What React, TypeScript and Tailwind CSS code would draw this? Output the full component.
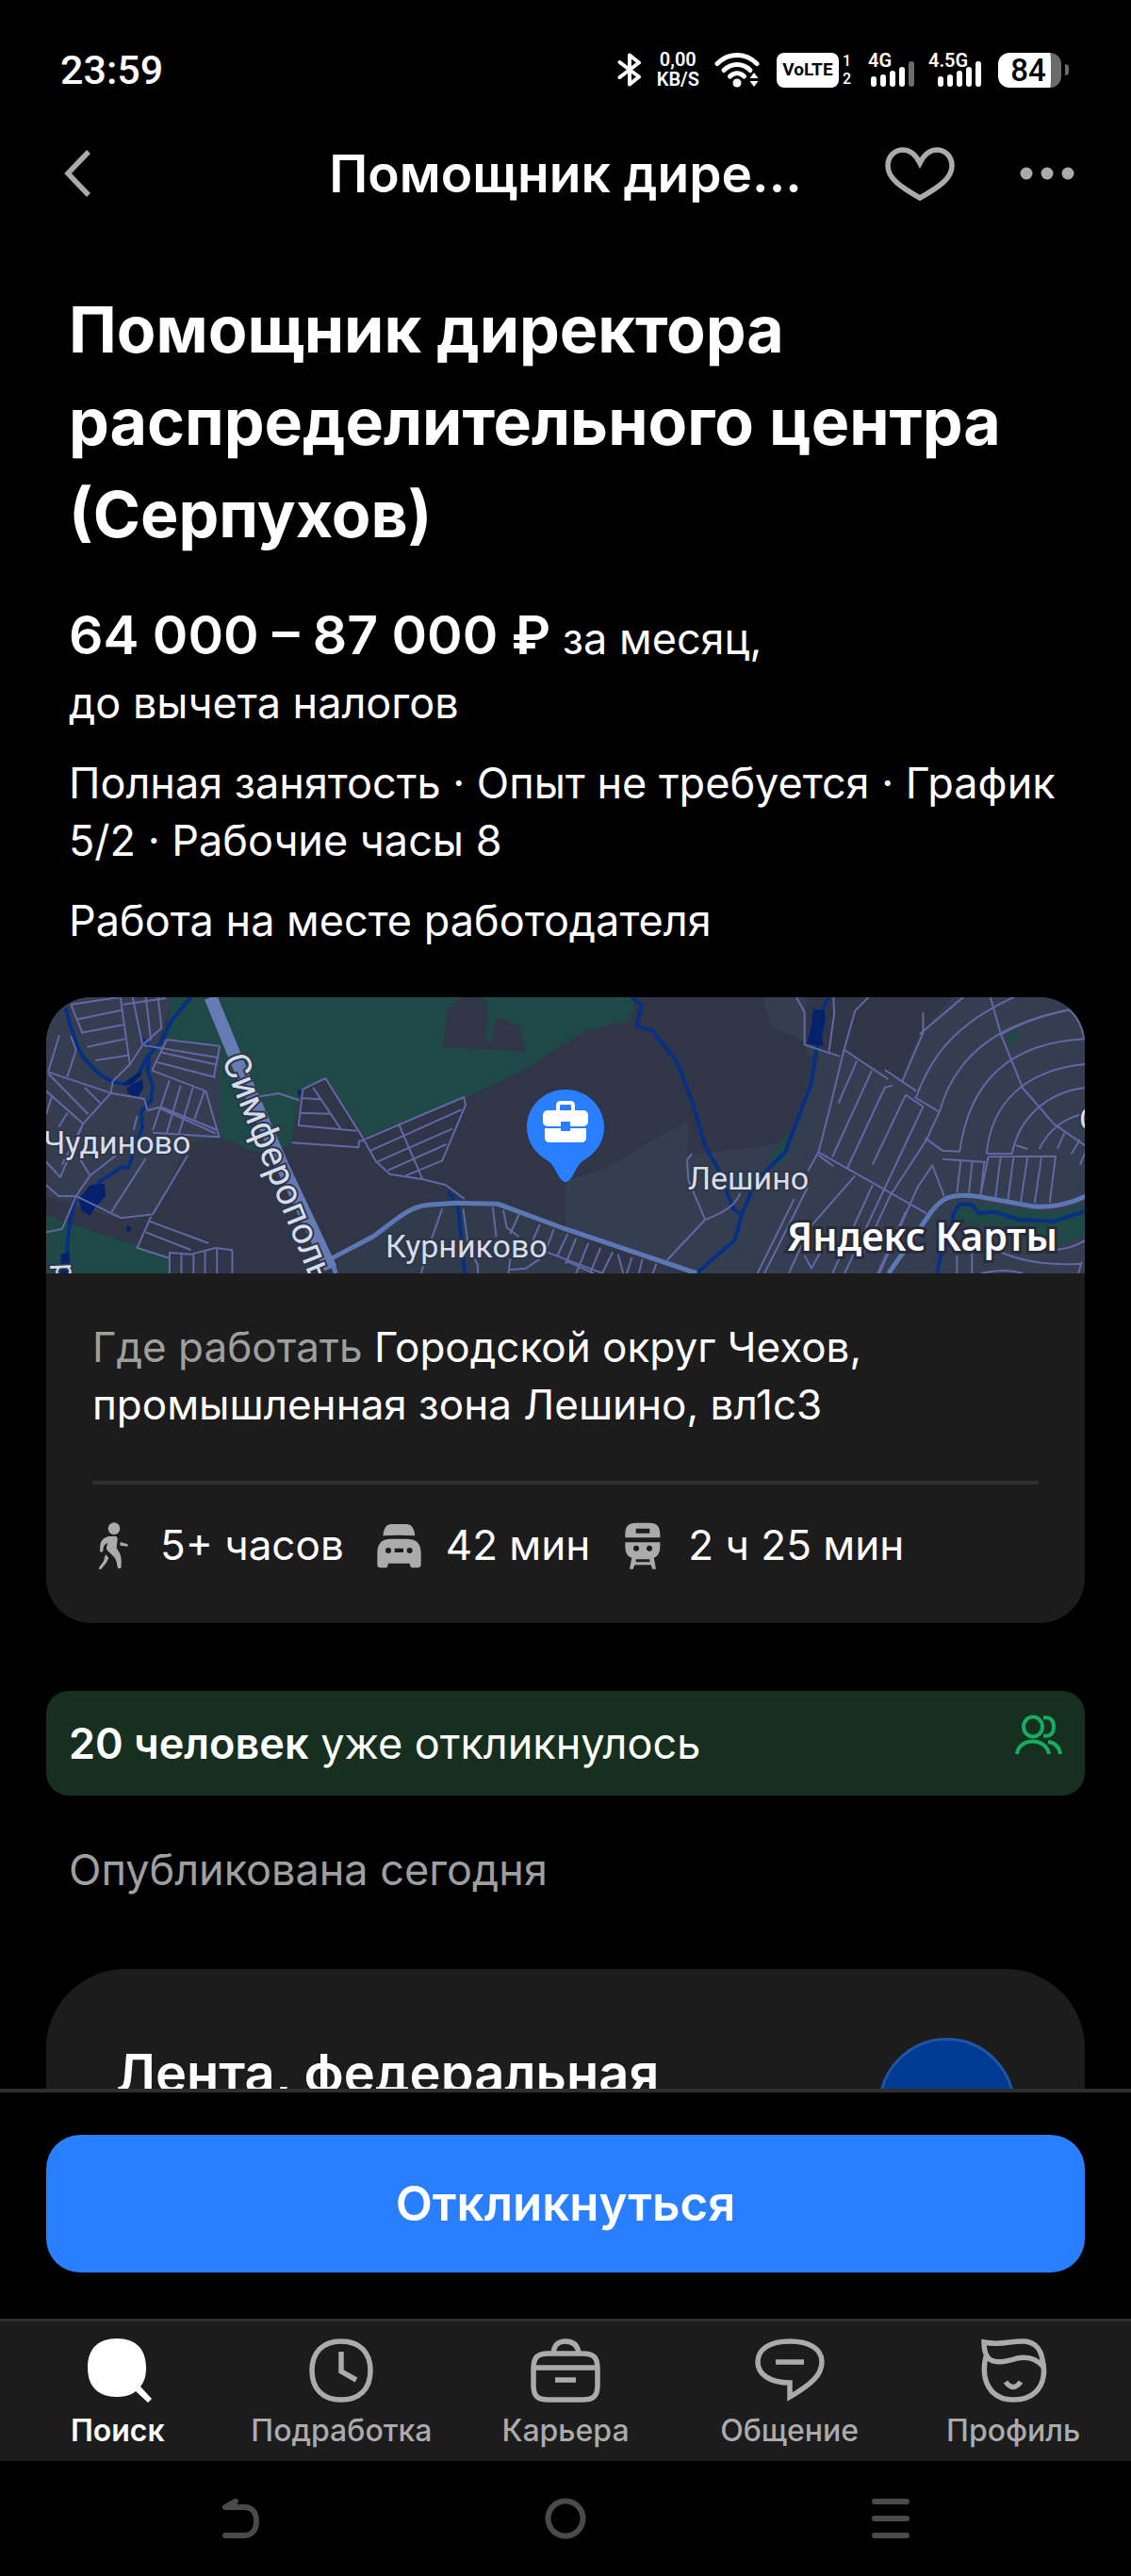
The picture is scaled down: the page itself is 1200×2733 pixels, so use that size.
import React, { useState } from 'react';

interface IconProps {
  className?: string;
}

function BluetoothIcon() {
  return (
    <svg viewBox="0 0 26 36" className="h-9 w-[26px]" fill="none" stroke="currentColor" strokeWidth="4" strokeLinejoin="round" strokeLinecap="round">
      <path d="M2.500 10 L23 25.500 L13 33.500 V2.500 L23 10.500 L2.500 26" />
    </svg>
  );
}

function WifiIcon() {
  return (
    <svg viewBox="0 0 48 38" className="h-[38px] w-12" fill="none" stroke="currentColor" strokeWidth="5" strokeLinecap="round">
      <path d="M3 12.500 C15 0.500 33 0.500 45 12.500" />
      <path d="M10 19.500 C18 11.500 30 11.500 38 19.500" />
      <path d="M16.500 26 C21 21.500 27 21.500 31.500 26" />
      <circle cx="24" cy="33" r="4.500" fill="currentColor" stroke="none" />
      <path d="M42 22 L46.500 28 H37.500Z M42 37 L37.500 31 H46.500Z" fill="currentColor" stroke="none" />
    </svg>
  );
}

function SignalIcon({ label, bars }: { label: string; bars: number }) {
  const tops = [26, 24, 20, 16, 10];
  return (
    <svg viewBox="0 0 56 38" className="h-[38px] w-14 overflow-visible" role="img" aria-label={label}>
      <text x="0" y="16" fontSize="20" fontWeight="600" fill="currentColor" className="font-['Roboto',sans-serif]">
        {label}
      </text>
      {tops.map((top, i) => (
        <rect key={top} x={(bars === 5 ? 10 : 3) + i * 10} y={top} width="6" height={37 - top} rx="3" fill={i < bars ? '#fff' : '#6b6b6b'} />
      ))}
    </svg>
  );
}

function StatusBar() {
  return (
    <div className="flex h-[148px] shrink-0 items-center justify-between pr-[66px] pl-16 font-['Roboto',sans-serif] font-medium">
      <span className="text-[43px] leading-none">23:59</span>
      <div className="flex items-center">
        <BluetoothIcon />
        <div className="ml-4 text-center text-[20px] leading-[21px] font-semibold">
          <div>0,00</div>
          <div>KB/S</div>
        </div>
        <div className="ml-4">
          <WifiIcon />
        </div>
        <span className="ml-[18px] flex h-[37px] w-[66px] items-center justify-center rounded-lg bg-white text-[19px] font-bold text-black">
          VoLTE
        </span>
        <div className="ml-1 text-base leading-[19px]">
          <div>1</div>
          <div>2</div>
        </div>
        <div className="ml-[18px] flex gap-2">
          <SignalIcon label="4G" bars={4} />
          <SignalIcon label="4.5G" bars={5} />
        </div>
        <div className="ml-[18px] flex items-center gap-1">
          <span className="flex h-[37px] w-[67px] items-center justify-center rounded-xl border-r-[11px] border-[#6b6b6b] bg-white pl-2 text-[33px] leading-none text-black">
            84
          </span>
          <span className="h-3 w-1 rounded-r bg-[#6b6b6b]" />
        </div>
      </div>
    </div>
  );
}

function Header() {
  const [liked, setLiked] = useState(false);
  return (
    <header className="flex h-[72px] shrink-0 items-center justify-between pr-[60px] pl-[66px]">
      <button type="button" aria-label="Назад" className="flex w-[206px] text-[#ababab]">
        <svg viewBox="0 0 32 52" className="h-[52px] w-8" fill="none" stroke="currentColor" strokeWidth="5.500">
          <path d="M28 3 L6 26 L28 49" />
        </svg>
      </button>
      <div className="flex-1 truncate text-center text-[55px] leading-[72px] font-semibold">Помощник дире...</div>
      <div className="flex w-[212px] items-center justify-end gap-[68px] text-[#ababab]">
        <button type="button" aria-label="В избранное" aria-pressed={liked} onClick={() => setLiked(!liked)}>
          <svg viewBox="0 0 76 58" className="h-[58px] w-[76px]" fill={liked ? 'currentColor' : 'none'} stroke="currentColor" strokeWidth="5.500">
            <path d="M38 18 C33 8 27 4 20 4 C11 4 4 11 4 21 C4 34 17 43 38 55 C59 43 72 34 72 21 C72 11 65 4 56 4 C49 4 43 8 38 18Z" />
          </svg>
        </button>
        <button type="button" aria-label="Ещё">
          <svg viewBox="0 0 58 14" className="h-3.5 w-[58px]" fill="currentColor">
            <circle cx="7" cy="7" r="6.500" />
            <circle cx="29" cy="7" r="6.500" />
            <circle cx="51" cy="7" r="6.500" />
          </svg>
        </button>
      </div>
    </header>
  );
}

// Two adjoining tiles share one stretched grid, so strokes must not scale.
function RoadMap() {
  return (
    <svg viewBox="0 0 1102 293" preserveAspectRatio="xMidYMid slice" className="block w-full" role="img" aria-label="Карта">
      <rect width="1102" height="293" fill="#303647" />
      <g transform="translate(-9 -19) scale(0.37 0.3333)" fill="none" strokeLinejoin="round" className="[&_path]:[vector-effect:non-scaling-stroke]">
        <g>
          <path fill="#1f4947" d="M385 57 H1700 V130 L1568 165 L1400 285 L1230 375 L940 500 L825 315 L755 350 L725 530 L620 550 L520 500 L430 520 L525 210 L370 190Z" />
          <path fill="#1f4947" d="M24 750 L130 790 L290 850 L380 890 V936 H24Z M80 90 L130 190 L210 320 L150 270 L100 190Z" />
          <path fill="#303647" d="M1160 215 L1175 100 L1210 57 H1275 L1290 90 L1285 200 L1300 200 L1315 120 L1380 145 L1400 230Z" />
          <path fill="#343e50" d="M24 57 H385 L350 190 L525 210 L520 500 L430 520 L340 740 L220 760 L24 690Z" />
          <path fill="#303b4b" d="M860 890 L1080 720 L1320 715 L1568 820 V936 H850Z" />
        </g>
        <g stroke="#053084" strokeWidth="4">
          <path d="M80 90 C100 180 120 240 140 260 C180 310 200 325 250 335 C300 320 290 280 320 240 L350 205 L385 130 L440 57" />
          <path d="M297 185 L320 215 L350 215 M320 240 L315 290 L330 340 L325 385 L297 420 L300 470 L260 600 L240 598 L170 650 M110 690 C90 760 85 820 82 930 M1175 675 L1205 720 L1225 936" />
        </g>
        <path fill="#05216e" d="M255 345 L300 318 L303 345 L285 380 L258 362Z M150 655 L192 650 L195 690 L165 725 L150 752 L125 735 L118 700Z M240 335 L290 295 L300 300 L270 335Z M66 875 L90 868 L96 936 H66Z M745 350 L762 358 L748 375Z M255 785 h12 v18 h-12Z" />
        <g stroke="#6367a5" strokeWidth="2">
          <path d="M95 80 L235 57 M110 128 L240 98 M125 170 L245 145 M142 215 L250 190 M165 258 L258 242 M95 80 L128 170 M237 57 L265 275 M245 80 L368 60 M272 57 L300 205 M310 57 L325 195 M345 57 L355 155 L300 210 L265 270 L215 325 L210 362 L130 460" />
          <path d="M305 210 L520 250 M370 192 L522 212 M350 232 L515 272 M335 262 L510 312 M328 290 L480 355 M370 192 L328 290 M522 212 L505 312" />
          <path d="M378 322 L330 480 M410 338 L370 490 M445 345 L405 492 M478 355 L450 445 M482 355 L520 502 L330 488 M350 405 L515 480 M315 418 L345 408 L510 490" />
          <path d="M62 178 L30 295 L210 362 L305 380 L315 418 M95 180 L110 225 L85 310 M30 300 L145 430 M24 355 L130 460 L65 630 L24 580 M135 345 L180 395 M40 375 L24 430 M85 425 L60 470 M130 460 L70 590" />
          <path d="M24 655 L60 690 L110 690 L240 760 L330 748 L430 560 M110 690 L150 625 L225 560 M120 570 L150 625 M212 740 L310 570 M110 690 L70 795 L24 805 M325 755 L285 855 L380 888 M320 770 L490 840 M310 805 L440 862 M378 936 V870 L440 875 L510 855 L558 862 V936 M412 870 V936 M447 874 V936 M480 865 V936 M514 855 V936 M275 480 L285 435" />
          <path d="M625 375 L690 363 L750 385 M760 350 L825 315 L930 500 L970 580 L1010 620 L1105 637 L1170 655 L1225 700 M760 350 L748 465 L915 482 M790 345 L870 478 M755 378 L815 382 M752 425 L840 428 M728 520 L920 535 L922 515 L940 512" />
          <path d="M940 508 L1222 375 L1227 400 L1160 577 L1055 625 M955 545 L1215 415 M975 580 L1190 475 M1005 608 L1172 525 M1037 465 L1103 635" />
          <path d="M1160 730 L1130 825 M1220 730 L1235 850 L1262 910 V936 M1305 725 L1315 820 M1335 735 L1345 790 L1380 820 M1380 748 L1355 810 M1440 780 L1412 850 M1480 795 L1455 870 M1520 810 L1490 880 M1100 936 L1108 900 M1350 936 L1355 890 M1350 925 L1400 920 L1440 890 M1440 860 L1620 936" />
        </g>
        <g transform="translate(1514 0)">
          <path fill="#1f4947" d="M0 57 H65 V140 L0 190Z M90 57 H190 L200 110 L170 75 L90 75Z" />
          <path fill="#343e50" d="M565 57 H690 V240 L730 240 L640 520 L350 560 L350 450 L100 610 L0 640 V790 L370 936 H1490 V57 H870 L800 220 L780 250 L690 200 L590 150Z" />
          <path fill="#303647" d="M870 57 H1110 L1010 180 L960 325 L800 230Z" />
          <path fill="#1f4947" d="M1120 720 L1180 715 L1400 745 L1490 715 V815 L1410 850 L1340 800 L1200 780 L1110 780Z M590 560 L640 480 L630 580 L590 600Z M1262 168 L1290 162 L1300 190 L1275 212Z" />
          <g stroke="#053084" strokeWidth="4">
            <path d="M190 57 L218 85 L203 148 L250 165 L320 265 L360 380 L400 530 L440 610 L480 730 L505 748" />
            <path d="M755 57 L735 100 L720 210 L705 330 L630 550 L565 620 L530 680 L505 750 L485 830 L375 936" />
            <path d="M1065 936 L1075 880 L1110 810 V750 L1130 715 L1165 718 L1185 745 L1230 740 L1300 765 L1400 770 L1490 738" />
          </g>
          <path fill="#05216e" d="M710 95 L742 98 L745 130 L735 180 L738 212 L692 205 L705 145Z" />
          <g stroke="#6367a5" strokeWidth="2">
            <path d="M662 57 L685 105 V208 L785 245 M768 57 L770 110 L755 230 M868 57 L830 100 L798 225 L790 260 L760 400 L725 550 L695 610 M800 225 L925 318 M915 288 L1005 355 M1000 375 L1072 422 M835 260 L782 395 M878 290 L765 565" />
            <path d="M937 338 L915 345 L808 600 M1025 105 V170 L965 325 M1140 57 L1015 175 M1285 57 C1120 140 1050 240 1005 375 M975 368 L1025 405 L800 936 M975 368 L880 590 M1072 422 L1035 510 L930 690 L850 880 M1030 505 L1080 545 L1130 548" />
            <path d="M1218 57 L1248 175 L1310 345 L1400 460 L1490 530 M1490 190 C1300 200 1160 300 1130 548 M1445 97 C1250 140 1120 230 1072 422 M1445 97 C1470 125 1480 150 1487 190 M1490 270 C1310 290 1220 400 1207 555 M1207 555 H1280 C1300 440 1380 360 1490 345 M1358 540 C1390 470 1440 440 1480 430 M1410 538 L1430 490 M1450 555 L1475 510 M1475 590 L1490 550 M1290 528 L1325 540" />
            <path d="M1248 175 C1330 125 1390 110 1445 97 M725 550 L1035 745 M725 560 L768 595 M1080 572 L1205 582 M1212 565 L1405 563 L1388 710 M1212 565 L1190 685 M1133 577 L1122 680 M1166 580 L1156 680 M1200 582 L1190 690 M1247 568 L1232 700 M1284 568 L1268 705 M1324 568 L1305 710 M1364 568 L1345 712" />
            <path d="M1085 690 L1052 592 L1010 660 L900 936 M830 625 L700 790 L640 936 M880 655 L765 936 M975 740 L895 936 M695 660 L570 936 M655 700 L550 936 M685 880 L705 920 L740 850" />
            <path d="M362 555 L348 575 L352 640 L400 765 L290 895 M400 765 C450 745 490 720 500 680" />
            <path d="M30 825 L0 905 M65 840 L30 936 M100 855 L70 936 M135 868 L105 936 M150 875 L165 936 M190 885 L175 936 M220 890 L210 936 M260 905 L250 936 M0 895 L80 936 M1122 880 V936 M1165 870 V936 M1250 870 C1330 905 1400 910 1480 905 M1190 936 C1260 920 1290 930 1310 936 M1480 900 L1470 936 M1320 850 C1400 870 1450 860 1490 830" />
          </g>
        </g>
        <g stroke="#5b78b5">
          <path strokeWidth="5" d="M855 936 L840 890 L960 820 C1030 765 1060 725 1120 718 L1200 712 L1320 715 L1514 795 L1890 936" />
          <path strokeWidth="5" d="M2440 936 L2550 760 C2590 690 2620 680 2700 692 L2850 722 C2920 730 2970 710 3010 688" />
        </g>
        <path stroke="#667bb4" strokeWidth="14" d="M496 57 L575 270 L700 590 L840 920" />
      </g>
      <g fill="#d5deed" className="font-['Roboto',sans-serif]" fontSize="34" stroke="#303647" strokeWidth="4" paintOrder="stroke">
        <text x="-3" y="166">Чудиново</text>
        <text x="360" y="276">Курниково</text>
        <text x="681" y="204">Лешино</text>
        <text x="1096" y="141">С</text>
        <text transform="translate(186 66) rotate(68)" fontSize="39">Симферополь</text>
        <text transform="translate(10 283) rotate(87)" fontSize="30">р</text>
      </g>
      <text x="1073" y="269" textAnchor="end" fontSize="41" fontWeight="600" fill="#fff" stroke="#272c38" strokeWidth="6" paintOrder="stroke" className="font-['Noto_Sans',sans-serif]">
        Яндекс Карты
      </text>
      <g>
        <path fill="#297fff" d="M551 98 C574 98 592 116 592 138 C592 154 583 166 569 174 C563 178 561 187 556 193 C553 197 549 197 546 193 C541 187 539 178 533 174 C519 166 510 154 510 138 C510 116 528 98 551 98Z" />
        <path fill="none" stroke="#fff" strokeWidth="4" d="M543 121 V115 Q543 112 546 112 H556 Q559 112 559 115 V121" />
        <rect x="527" y="120" width="48" height="17" rx="5" fill="#fff" />
        <path fill="#fff" d="M529 139 H573 V149 Q573 154 568 154 H534 Q529 154 529 149Z" />
        <rect x="546" y="132" width="10" height="10" fill="#297fff" />
      </g>
    </svg>
  );
}

function WalkIcon() {
  return (
    <svg viewBox="0 0 144 150" className="h-[50px] w-12" fill="currentColor">
      <circle cx="69" cy="20" r="19" />
      <path d="M24 93 L25 72 C27 58 38 48 52 45 L72 44 Q80 45 80 54 L77 82 C88 98 92 108 92 120 V144 Q86 151 80 144 C79 132 76 120 70 112 L48 90 Q43 84 46 76 L49 65 C40 70 36 74 35 82 L34 92 Q28 98 24 93Z" />
      <path d="M43 103 L52 114 L44 130 L28 149 H20 L22 143 L36 124 L40 108Z" />
      <path d="M89 63 L112 70 Q115 73 112 77 L88 74Z" />
    </svg>
  );
}

function CarIcon() {
  return (
    <svg viewBox="0 0 156 150" className="h-[50px] w-[52px]" fill="currentColor">
      <path d="M28 43 C31 15 40 7 55 6 H102 C118 7 126 15 130 43 Q79 39 28 43Z" />
      <path
        fillRule="evenodd"
        d="M10 95 C12 65 25 53 55 53 H103 C133 53 147 65 149 95 V135 Q148 145 138 145 H124 Q115 145 113 131 H45 Q43 145 35 145 H20 Q10 145 10 135Z M36 90 a9 9 0 1 0 18 0 a9 9 0 1 0 -18 0Z M104 90 a9 9 0 1 0 18 0 a9 9 0 1 0 -18 0Z M65 83 V96 H93 V83Z"
      />
    </svg>
  );
}

function TrainIcon() {
  return (
    <svg viewBox="0 0 144 150" className="h-[50px] w-12" fill="currentColor" fillRule="evenodd">
      <path d="M16 49 V40 C16 14 25 2 50 2 H93 C118 2 127 14 127 40 V49Z M50 20 V35 H94 V20Z" />
      <path d="M16 64 H127 V75 C127 100 118 113 100 114 H43 C25 113 16 100 16 75Z M42 83 a9 9 0 1 0 18 0 a9 9 0 1 0 -18 0Z M84 83 a9 9 0 1 0 18 0 a9 9 0 1 0 -18 0Z" />
      <path d="M37 112 L30 149 H41 L46 136 H98 L103 149 H114 L107 112Z M50 118 V127 H94 V118Z" />
    </svg>
  );
}

function PeopleIcon() {
  return (
    <svg viewBox="0 0 50 44" className="h-11 w-[50px] text-[#16ad60]" fill="none" stroke="currentColor" strokeWidth="4">
      <ellipse cx="19" cy="13" rx="10" ry="10.500" />
      <path d="M30 3.500 C37 2 41 6 41 13 C41 20 37 24 30 22.500" />
      <path d="M2 42 C4 24 33 24 36 42" />
      <path d="M35 29 C43 30 47 35 48 42" />
    </svg>
  );
}

function SearchTabIcon({ className }: IconProps) {
  return (
    <svg viewBox="0 0 76 72" className={className}>
      <path fill="currentColor" d="M37 1 C57 1 68 12 68 32 C68 41 66 47 62 52 L74 65 L70 69 L57 57 C52 61 46 63 37 63 C17 63 6 52 6 32 C6 12 17 1 37 1Z" />
    </svg>
  );
}

function ClockTabIcon({ className }: IconProps) {
  return (
    <svg viewBox="0 0 76 72" className={className} fill="none" stroke="currentColor" strokeWidth="5.500">
      <path d="M38 4 C58 4 69 16 69 35 C69 54 58 66 38 66 C18 66 7 54 7 35 C7 16 18 4 38 4Z" />
      <path d="M38 15 V36 L54 45" />
    </svg>
  );
}

function CareerTabIcon({ className }: IconProps) {
  return (
    <svg viewBox="0 0 76 72" className={className} fill="none" stroke="currentColor" strokeWidth="5.500">
      <path d="M38 17 H56 C68 17 72 21 72 33 V50 C72 62 68 66 56 66 H20 C8 66 4 62 4 50 V33 C4 21 8 17 20 17Z" />
      <path d="M25 17 C26 7 31 4 38 4 C45 4 51 7 52 17 M4 32 H72 M27 45 H49" />
    </svg>
  );
}

function ChatTabIcon({ className }: IconProps) {
  return (
    <svg viewBox="0 0 76 72" className={className} fill="none" stroke="currentColor" strokeWidth="5.500">
      <path d="M38 48 C17 48 4 39 4 26 C4 12 17 4 38 4 C59 4 72 12 72 26 C72 40 60 50 38 63Z" />
      <path d="M23 26 H53" />
    </svg>
  );
}

function ProfileTabIcon({ className }: IconProps) {
  return (
    <svg viewBox="0 0 76 72" className={className} fill="none" stroke="currentColor" strokeWidth="5.500">
      <path d="M7 5 C26 9 36 3 50 4 C63 5 69 14 70 31 C62 21 52 20 42 22 C30 26 16 28 11 21 C8 17 7 12 7 5Z" />
      <path d="M9 20 C3 46 14 66 38 66 C62 66 73 50 70 28" />
      <path d="M30 47 Q38 58 46 47" />
    </svg>
  );
}

const commute = [
  { icon: WalkIcon, time: '5+ часов' },
  { icon: CarIcon, time: '42 мин' },
  { icon: TrainIcon, time: '2 ч 25 мин' }
];

const tabs = [
  { icon: SearchTabIcon, label: 'Поиск' },
  { icon: ClockTabIcon, label: 'Подработка' },
  { icon: CareerTabIcon, label: 'Карьера' },
  { icon: ChatTabIcon, label: 'Общение' },
  { icon: ProfileTabIcon, label: 'Профиль' }
];

function TabBar() {
  const [active, setActive] = useState('Поиск');
  return (
    <nav className="flex border-t-[3px] border-[#303030] bg-[#1c1c1c] pt-[17px] pr-1.5 pl-1.5 pb-3">
      {tabs.map(({ icon: Icon, label }) => (
        <button
          key={label}
          type="button"
          onClick={() => setActive(label)}
          className={`flex flex-1 flex-col items-center gap-[7px] ${active === label ? 'font-semibold text-white' : 'font-medium text-[#ababab]'}`}
        >
          <Icon className="h-[72px] w-[76px]" />
          <span className="text-[32px] leading-10">{label}</span>
        </button>
      ))}
    </nav>
  );
}

function SystemNav() {
  return (
    <div className="flex h-[122px] items-center px-[82px] text-[#4a4a4a]">
      <button type="button" aria-label="Назад" className="flex flex-1 justify-center">
        <svg viewBox="0 0 44 44" className="size-11" fill="none" stroke="currentColor" strokeWidth="6" strokeLinecap="round" strokeLinejoin="round">
          <path d="M17 4 L6 10 H26 C36 10 39 17 39 25 C39 33 35 40 26 40 H6" />
        </svg>
      </button>
      <button type="button" aria-label="Домой" className="flex flex-1 justify-center">
        <svg viewBox="0 0 44 44" className="size-11" fill="none" stroke="currentColor" strokeWidth="6">
          <circle cx="22" cy="22" r="18.500" />
        </svg>
      </button>
      <button type="button" aria-label="Недавние" className="flex flex-1 justify-center">
        <svg viewBox="0 0 44 44" className="size-11" stroke="currentColor" strokeWidth="6" strokeLinecap="round">
          <path d="M5 4 H39 M5 22 H39 M5 40 H39" />
        </svg>
      </button>
    </div>
  );
}

export default function App() {
  return (
    <div className="flex h-screen flex-col overflow-hidden bg-black font-['Inter',sans-serif] text-white">
      <StatusBar />
      <Header />

      <main className="min-h-0 flex-1 overflow-y-auto px-[49px] pt-20 text-[45px] leading-[61px] [scrollbar-width:none]">
        <div className="px-6">
          <h1 className="text-[68px] leading-[98px] font-bold">Помощник директора распределительного центра (Серпухов)</h1>
          <p className="mt-[46px] leading-[68px]">
            <span className="text-[57px] font-semibold">64 000 – 87 000 ₽</span> за месяц,
            <br />
            до вычета налогов
          </p>
          <p className="mt-5">Полная занятость · Опыт не требуется · График 5/2 · Рабочие часы 8</p>
          <p className="mt-6">Работа на месте работодателя</p>
        </div>

        <section className="mt-[51px] overflow-hidden rounded-[48px] bg-[#1c1c1c]">
          <RoadMap />
          <div className="px-[49px] pt-12 pb-[52px] text-[44px]">
            <p>
              <span className="text-[#9f9f9f]">Где работать</span> Городской округ Чехов, промышленная зона Лешино, вл1с3
            </p>
            <ul className="mt-[50px] flex gap-8 border-t-4 border-[#303030] pt-[34px]">
              {commute.map(({ icon: Icon, time }) => (
                <li key={time} className="flex items-center gap-6">
                  <span className="text-[#ababab]">
                    <Icon />
                  </span>
                  {time}
                </li>
              ))}
            </ul>
          </div>
        </section>

        <div className="mt-[72px] flex items-start justify-between rounded-3xl bg-[#172f1e] px-6 py-[25px]">
          <p>
            <span className="font-semibold">20 человек</span> уже откликнулось
          </p>
          <PeopleIcon />
        </div>

        <p className="mt-12 px-6 text-[#9f9f9f]">Опубликована сегодня</p>

        <section className="mt-[75px] flex items-start justify-between rounded-[84px] bg-[#1c1c1c] px-[74px] py-[73px]">
          <h2 className="text-[56px] leading-[76px] font-semibold">Лента, федеральная</h2>
          <div className="size-[145px] rounded-full border-[3px] border-[#1f55a5] bg-[#013a92]" />
        </section>
      </main>

      <footer className="shrink-0">
        <div className="border-t-4 border-[#2e2e2e] px-[49px] pt-[45px] pb-[49px]">
          <button type="button" className="w-full rounded-[36px] bg-[#297fff] py-[38px] text-[51px] leading-[70px] font-semibold">
            Откликнуться
          </button>
        </div>
        <TabBar />
        <SystemNav />
      </footer>
    </div>
  );
}
